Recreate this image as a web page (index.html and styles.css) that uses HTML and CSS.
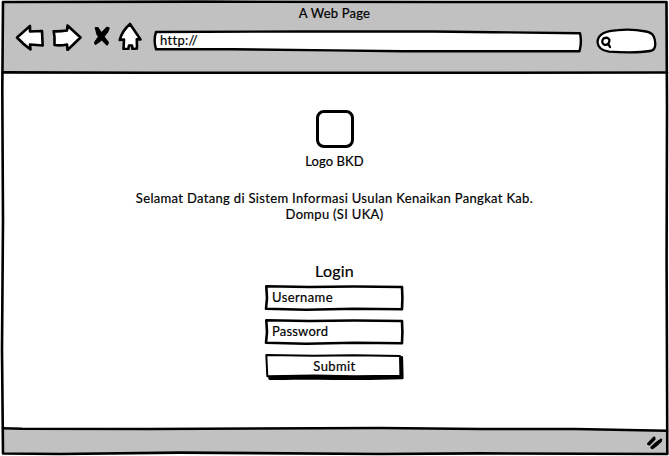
FILE: index.html
```html
<!DOCTYPE html>
<html lang="id">
<head>
<meta charset="utf-8">
<title>A Web Page</title>
<link rel="stylesheet" href="styles.css">
</head>
<body>
<div class="window">
  <svg class="frame" viewBox="0 0 669 456" aria-hidden="true">
    <path class="bar" d="M3 2H666L667 72.5L3 72Z"/>
    <path class="bar" d="M3 428.5L150 429L380 428L480 429L667 430.5V453.5L3 453Z"/>
    <path class="line" d="M3 72.4L150 72.8L370 72.8L480 72.8L667 72.5M3 428.3L22 428.8L150 429L380 428L480 429L575 429L667 430.7"/>
    <path class="line" d="M3 2L200 1.6L450 2L666.5 2L667 110L666.6 260L667.3 454L480 453.4L380 454L180 452.6L60 454L3 453.5L2 350L3 220L2.3 90Z"/>
  </svg>
  <header class="chrome">
    <h1 class="title">A Web Page</h1>
    <nav class="toolbar">
      <svg class="icon back" viewBox="0 0 30 28"><path d="M2 14.5L15 3V8.5L27 8L27.7 22.5L15 21.5L15.5 26.5Q8 21 2 14.5Z"/></svg>
      <svg class="icon forward" viewBox="0 0 30 28"><path d="M15.5 2.5L28.5 14.5L15.5 27L15 21.5Q8 23 2.5 22V14L1.7 8.3Q8 8.5 15 7.5Z"/></svg>
      <svg class="icon stop" viewBox="0 0 20 24"><path d="M3.7 4L5.5 10.5L15 20.5L16 18.5L11 12L5.7 4ZM15 3.8L8.5 10.5L3 18.5L3.5 20L8.5 16.5L15.5 7.5L16.7 4.2Z"/></svg>
      <svg class="icon home" viewBox="0 0 24 28"><path d="M12 2L22.5 17.5L18.8 17.2L19 26.5L14.5 27L14 23.5H11L10.3 27H5.5L6 17.5L1.7 18Q4 9 12 2Z"/></svg>
      <div class="address">
        <svg viewBox="0 0 430 24" aria-hidden="true"><path d="M3 3L150 2.5L280 2.5L340 3.2L427 4.2Q429 13 426.5 22.3L250 22.3L180 21.4L80 20.2L3 20.3Q.3 11 3 3Z"/></svg>
        <span class="url">http://</span>
      </div>
      <svg class="search" viewBox="0 0 62 28"><path class="pill" d="M2.5 15C3 6 12 4 23 3.2Q36 1.5 51 4.5C59 6 60 11 60.3 17Q60.5 23 55 24C43 26 28 25.5 14 24.7Q3 23 2.5 15Z"/><path class="lens" d="M8.5 11.5Q13 9.5 14.5 13Q14 18.5 9.5 17.8Q5.5 15.5 8.5 11.5M13.3 17L15 20"/></svg>
    </nav>
  </header>
  <main class="page">
    <div class="logo"></div>
    <p class="caption">Logo BKD</p>
    <p class="welcome"><span>Selamat Datang di Sistem Informasi Usulan Kenaikan Pangkat Kab.</span><br><span class="second">Dompu (SI UKA)</span></p>
    <h2 class="heading">Login</h2>
    <div class="field"><svg viewBox="0 0 140 27" aria-hidden="true"><path d="M2.3 2.3L45 3L90 2.5L138 3L138.4 14L138 25.3L90 24.8L42 25.7L2 24.8L3 14Z"/></svg><span>Username</span></div>
    <div class="field"><svg viewBox="0 0 140 27" aria-hidden="true"><path d="M2.3 2.3L45 3L90 2.5L138 3L138.4 14L138 25.3L90 24.8L42 25.7L2 24.8L3 14Z"/></svg><span class="password">Password</span></div>
    <div class="field submit"><svg viewBox="0 0 140 27" aria-hidden="true"><path class="shadow" d="M5.5 24.5L138 23.5L137.8 4.3L138.3 25L90 26L40 25.3L6 26Z"/><path class="face" d="M2.3 2L50 2.7L90 2.2L136 3L136.4 22.7L90 23.3L50 22.5L3.3 23.3Z"/></svg><span>Submit</span></div>
  </main>
  <footer class="status">
    <svg class="grip" viewBox="0 0 18 16"><path d="M2.2 8.8L8.2 2.7M3.2 9.4L8.5 4M5.5 12.5Q9.5 8 15 4.7M6.5 13Q11 10 14.8 6"/></svg>
  </footer>
</div>
</body>
</html>
```
FILE: styles.css
```css
* { box-sizing: border-box; margin: 0; padding: 0; }
body { background: #fff; color: #000; font: 13px/16px Lato, "Open Sans", sans-serif; overflow: hidden; -webkit-text-stroke: .2px #000; }
svg { display: block; fill: none; stroke: #000; stroke-linejoin: round; stroke-linecap: round; }
.window { position: relative; width: 669px; height: 456px; display: flex; flex-direction: column; }
.frame { position: absolute; inset: 0; width: 669px; height: 456px; z-index: -1; }
.bar { fill: #c1c1c1; stroke: none; }
.line { stroke-width: 2.6; }
.chrome { height: 73px; padding-top: 5px; }
.title { font-size: 13px; font-weight: 400; text-align: center; letter-spacing: .2px; }
.toolbar { display: flex; align-items: flex-start; padding-left: 15px; }
.icon { fill: #fff; stroke-width: 2.6; flex: none; }
.back { width: 30px; height: 28px; margin-top: 2px; }
.forward { width: 30px; height: 28px; margin: 2px 0 0 7px; }
.stop { width: 20px; height: 24px; margin: 3px 0 0 10px; fill: #000; stroke-width: 2; }
.home { width: 24px; height: 28px; margin: 1px 0 0 6px; }
.address { width: 430px; height: 24px; margin: 8px 0 0 11px; display: grid; flex: none; }
.address > *, .field > * { grid-area: 1 / 1; }
.address svg { fill: #fff; stroke-width: 2.4; width: 430px; height: 24px; }
.url { padding: 3px 0 0 7px; letter-spacing: .3px; z-index: 1; }
.search { width: 62px; height: 28px; margin: 6px 0 0 12px; stroke-width: 2.3; flex: none; }
.pill { fill: #fff; }
.page { height: 357px; display: flex; flex-direction: column; align-items: center; }
.logo { width: 38px; height: 38px; margin-top: 36px; border: 3px solid #000; border-radius: 8px; }
.caption { margin-top: 6px; letter-spacing: .1px; }
.welcome { margin-top: 21px; text-align: center; letter-spacing: .33px; white-space: nowrap; }
.welcome .second { letter-spacing: .3px; }
.heading { margin-top: 39px; font-size: 16px; line-height: 20px; font-weight: 400; letter-spacing: .2px; }
.field { width: 140px; height: 27px; display: grid; margin: 7px 1px 0 0; letter-spacing: .4px; }
.heading + .field { margin-top: 3px; }
.field svg { width: 140px; height: 27px; fill: #fff; stroke-width: 2.6; }
.field span { padding: 5px 0 0 8px; z-index: 1; }
.field .password { letter-spacing: .2px; }
.field.submit { margin-top: 8px; }
.field.submit span { padding: 5px 0 0 1px; text-align: center; }
.field.submit .face { stroke-width: 2; }
.status { height: 26px; display: flex; justify-content: flex-end; padding: 5px 5px 0 0; }
.grip { width: 18px; height: 16px; stroke-width: 2.4; }
.logo { margin-top: 37px; margin-bottom: -1px; }
```
